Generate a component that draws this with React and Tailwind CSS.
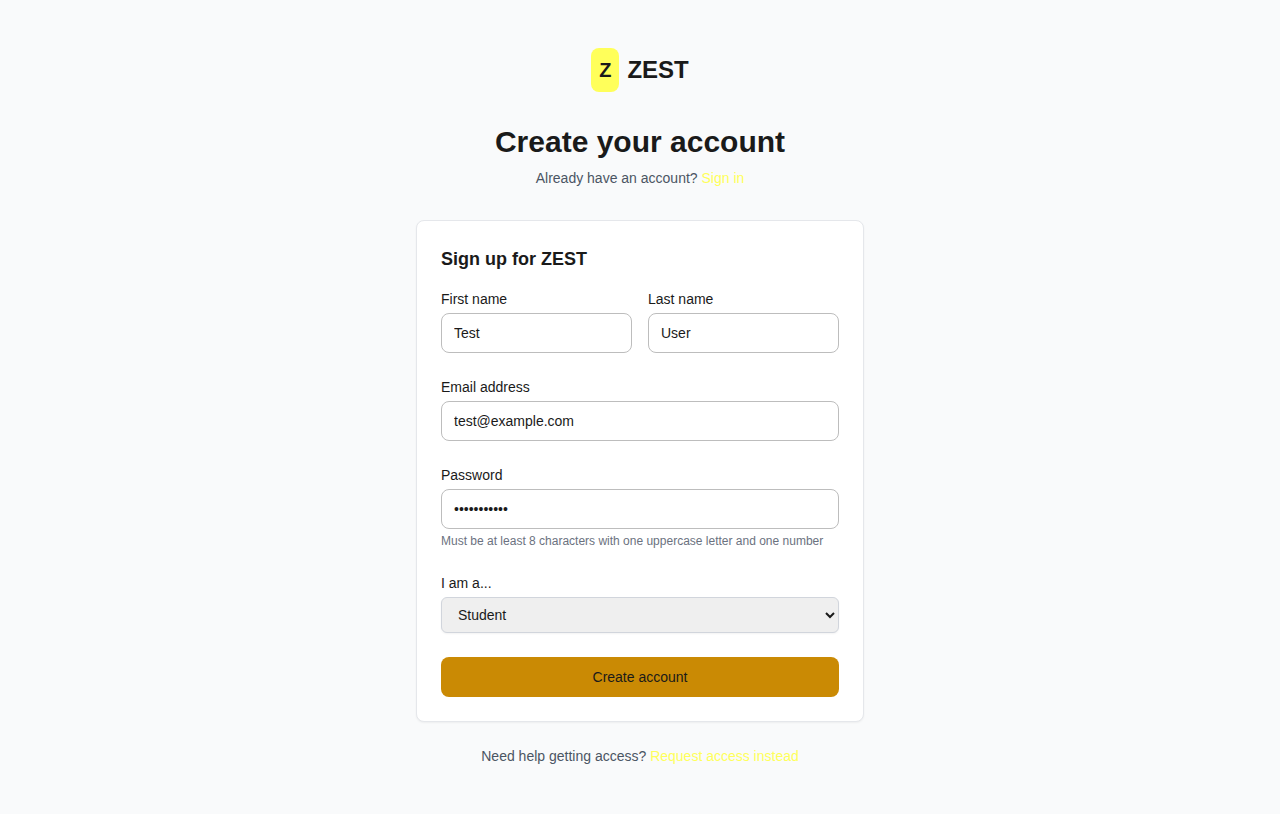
function Field({ id, label, hint, ...props }) {
  return (
    <div>
      <label htmlFor={id} className="mb-1 block text-sm">{label}</label>
      <input
        id={id}
        className="block h-10 w-full rounded-lg border border-[#bdbdbd] bg-white px-3 text-sm text-[#1a1a1a]"
        {...props}
      />
      {hint && <p className="mt-1 text-xs text-[#6b7280]">{hint}</p>}
    </div>
  );
}

export default function App() {
  return (
    <div className="flex min-h-screen flex-col items-center bg-[#f9fafb] px-4 py-12 font-['Liberation_Sans',Arial,sans-serif] text-[#1a1a1a]">
      <main className="w-full max-w-md">
        <div className="flex items-center justify-center gap-2">
          <div className="rounded-lg bg-[#ffff5a] p-2 text-xl font-bold">Z</div>
          <span className="text-2xl font-bold">ZEST</span>
        </div>
        <h1 className="mt-8 text-center text-3xl font-bold">Create your account</h1>
        <p className="mt-2 text-center text-sm text-[#4b5563]">
          Already have an account? <a href="#signin" className="text-[#ffff5a]">Sign in</a>
        </p>
        <section className="mt-8 rounded-lg border border-gray-200 bg-white p-6 shadow-xs">
          <h2 className="text-lg font-semibold">Sign up for ZEST</h2>
          <form className="mt-4 flex flex-col gap-6">
            <div className="grid grid-cols-2 gap-4">
              <Field id="first" label="First name" type="text" defaultValue="Test" />
              <Field id="last" label="Last name" type="text" defaultValue="User" />
            </div>
            <Field id="email" label="Email address" type="email" defaultValue="test@example.com" />
            <Field
              id="password"
              label="Password"
              type="password"
              defaultValue="Password123"
              hint="Must be at least 8 characters with one uppercase letter and one number"
            />
            <div>
              <label htmlFor="role" className="mb-1 block text-sm">I am a...</label>
              <select id="role" className="block h-9 w-full rounded-md border border-gray-300 bg-[#efefef] px-3 text-sm shadow-xs">
                <option>Student</option>
                <option>Teacher</option>
              </select>
            </div>
            <button type="submit" className="h-10 w-full rounded-lg bg-[#ca8a04] text-sm">Create account</button>
          </form>
        </section>
        <p className="mt-6 text-center text-sm text-[#4b5563]">
          Need help getting access? <a href="#request" className="text-[#ffff5a]">Request access instead</a>
        </p>
      </main>
    </div>
  );
}
